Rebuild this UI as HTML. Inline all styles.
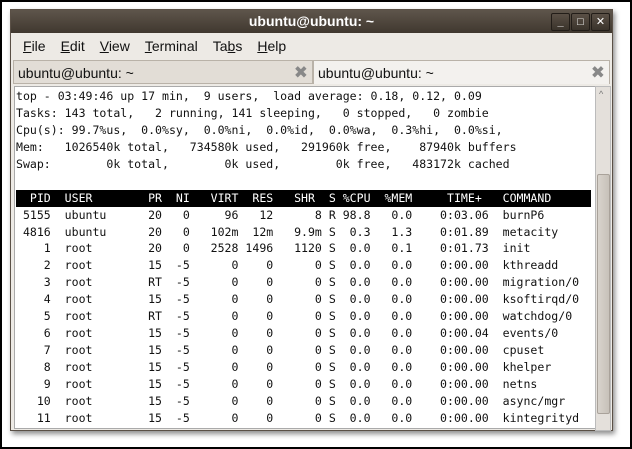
<!DOCTYPE html>
<html><head><style>
body{margin:0;width:632px;height:449px;overflow:hidden;background:#fff;position:relative;font-family:"Liberation Sans","DejaVu Sans",sans-serif}
.frame{position:absolute;left:0;top:0;width:628px;height:445px;border:2px solid #000;background:#fff}
.win{position:absolute;left:10px;top:9px;width:601px;height:420px;background:#edeae5;border:1px solid #5a5046;box-shadow:2px 3px 5px rgba(0,0,0,.45)}
.title{position:absolute;left:0;top:0;width:601px;height:23px;background:linear-gradient(#5e554b,#40382f);color:#fff;font-weight:bold;font-size:14px;text-align:center;line-height:23px}
.btn{position:absolute;top:3px;width:17px;height:16px;border:1px solid #221d18;border-radius:2px;background:linear-gradient(#5a5046,#3a332b);color:#fff;font-size:11px;line-height:16px;text-align:center;font-weight:bold}
.menu{position:absolute;left:0;top:24px;height:24px;font-size:14px;color:#111;line-height:24px}
.menu span{margin-left:12px;margin-right:3px}
.tabs{position:absolute;left:2px;top:48px;width:597px;height:27px}
.tab{position:absolute;top:2px;height:24px;font-size:14px;line-height:24px;color:#111;padding-left:4px;box-sizing:border-box}
.x{position:absolute;right:4px;top:0;color:#888;font-size:17px;font-weight:bold}
.term{position:absolute;left:3px;top:76px;width:581px;height:341px;background:#fff;border:1px solid #aaa}
pre{margin:0;position:absolute;left:1px;top:1px;font-family:"DejaVu Sans Mono",monospace;font-size:11.55px;line-height:16.93px;color:#111}
.hd{background:#000;color:#fff;display:inline-block;width:575px}
.sb{position:absolute;left:584px;top:76px;width:14px;height:343px;background:#e4e0db;border:1px solid #bbb}
.thumb{position:absolute;left:1px;top:87px;width:11px;height:238px;background:linear-gradient(90deg,#d8d3cc,#c7c1b9);border:1px solid #a9a29a;border-radius:2px}
</style></head><body>
<div class="frame"></div>
<div class="win">
<div class="title">ubuntu@ubuntu: ~
<div class="btn" style="left:540px">_</div><div class="btn" style="left:560px">□</div><div class="btn" style="left:580px">✕</div></div>
<div class="menu"><span><u>F</u>ile</span><span><u>E</u>dit</span><span><u>V</u>iew</span><span><u>T</u>erminal</span><span>Ta<u>b</u>s</span><span><u>H</u>elp</span></div>
<div class="tabs">
<div class="tab" style="left:0;width:300px;background:#e2ddd6;border:1px solid #b9b2a8">ubuntu@ubuntu: ~<span class="x">✖</span></div>
<div class="tab" style="left:300px;width:297px;background:#f3f1ee;border:1px solid #b9b2a8;border-bottom:none">ubuntu@ubuntu: ~<span class="x">✖</span></div>
</div>
<div class="term"><pre>top - 03:49:46 up 17 min,  9 users,  load average: 0.18, 0.12, 0.09
Tasks: 143 total,   2 running, 141 sleeping,   0 stopped,   0 zombie
Cpu(s): 99.7%us,  0.0%sy,  0.0%ni,  0.0%id,  0.0%wa,  0.3%hi,  0.0%si,
Mem:   1026540k total,   734580k used,   291960k free,    87940k buffers
Swap:        0k total,        0k used,        0k free,   483172k cached

<span class="hd">  PID  USER        PR  NI   VIRT  RES   SHR  S %CPU  %MEM     TIME+   COMMAND</span>
 5155  ubuntu      20   0     96   12      8 R 98.8   0.0    0:03.06  burnP6
 4816  ubuntu      20   0   102m  12m   9.9m S  0.3   1.3    0:01.89  metacity
    1  root        20   0   2528 1496   1120 S  0.0   0.1    0:01.73  init
    2  root        15  -5      0    0      0 S  0.0   0.0    0:00.00  kthreadd
    3  root        RT  -5      0    0      0 S  0.0   0.0    0:00.00  migration/0
    4  root        15  -5      0    0      0 S  0.0   0.0    0:00.00  ksoftirqd/0
    5  root        RT  -5      0    0      0 S  0.0   0.0    0:00.00  watchdog/0
    6  root        15  -5      0    0      0 S  0.0   0.0    0:00.04  events/0
    7  root        15  -5      0    0      0 S  0.0   0.0    0:00.00  cpuset
    8  root        15  -5      0    0      0 S  0.0   0.0    0:00.00  khelper
    9  root        15  -5      0    0      0 S  0.0   0.0    0:00.00  netns
   10  root        15  -5      0    0      0 S  0.0   0.0    0:00.00  async/mgr
   11  root        15  -5      0    0      0 S  0.0   0.0    0:00.00  kintegrityd</pre></div>
<div class="sb"><div style="position:absolute;left:3px;top:2px;font-size:9px;color:#777">^</div><div class="thumb"></div></div>
</div>
</body></html>
